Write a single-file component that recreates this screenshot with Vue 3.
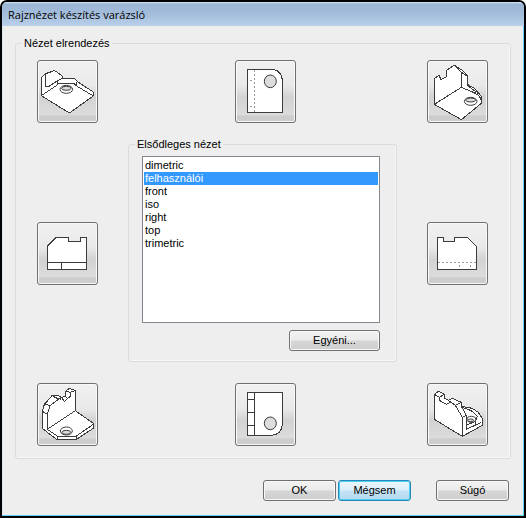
<script setup>
import { ref } from 'vue'

const views = ['dimetric', 'felhasználói', 'front', 'iso', 'right', 'top', 'trimetric']
const primary = ref('felhasználói')

const topRow = [
  {
    label: 'Bal felső izometrikus nézet', box: '21 18 183 189',
    body: 'M34 71 L47 59 L73 50 L82 55 L97 66 L98 73 L133 73 L142 83 L190 114 V126 L118 177 L34 125 Z',
    lines: 'M47 59 V97 L56 98 L83 80 L97 73 M34 125 L83 92 M83 80 V90 L91 87 H130 L140 96 L190 126 M140 83 V96',
    holes: [[109, 106, 19, 12], [109, 103, 14, 6]],
  },
  {
    label: 'Felülnézet', box: '21 24 183 189',
    body: 'M58 52 H130 Q163 54 163 88 V181 H58 Z',
    dashes: 'M79 55 V181 M66 85 H73 M66 163 H73',
    holes: [[127, 88, 18, 19]],
  },
  {
    label: 'Jobb felső izometrikus nézet', box: '21 24 183 189',
    body: 'M43 79 L58 70 L62 83 L79 74 V55 L103 40 L127 55 L142 70 V97 L163 109 L184 133 V154 L124 203 L43 157 Z',
    lines: 'M103 40 L124 61 V106 L43 157 M124 61 L142 73 M124 106 L160 121 L178 132 L184 145 M142 100 L166 118 V124 M172 119 V130',
    holes: [[152, 148, 19, 12], [152, 144, 15, 6]],
  },
]
const left = {
  label: 'Bal oldalnézet', box: '21 21 183 189',
  body: 'M52 94 L79 67 H115 V79 H151 V67 H169 V163 H52 Z',
  lines: 'M52 142 H169 M94 142 V163',
}
const right = {
  label: 'Jobb oldalnézet', box: '21 21 183 189',
  body: 'M52 67 H70 V79 H103 V67 H142 L169 94 V163 H52 Z',
  dashes: 'M55 142 H169 M118 151 V160 M151 151 V160',
}
const bottomRow = [
  {
    label: 'Bal alsó izometrikus nézet', box: '21 21 183 189',
    body: 'M37 106 L43 85 L67 58 L85 58 L94 64 L106 61 V46 L118 37 L136 43 V104 L190 142 V157 L139 190 L82 192 L37 157 Z',
    lines: 'M37 106 L52 115 V160 M52 115 L61 88 L94 64 M43 85 L61 88 M67 58 L76 65 L94 70 M94 64 L103 76 L121 61 V49 L136 43 M106 46 L121 49 M106 61 L112 68 M52 160 L136 104 M52 160 L82 180 H139 L190 145 M82 180 V192 M139 180 V190',
    holes: [[109, 165, 18, 12], [109, 169, 13, 6]],
  },
  {
    label: 'Alulnézet', box: '21 21 183 189',
    body: 'M58 49 H163 V145 Q161 176 130 178 H58 Z',
    lines: 'M79 49 V178 M58 70 H79 M58 109 H79 M58 148 H79',
    holes: [[127, 142, 18, 19]],
  },
  {
    label: 'Jobb alsó izometrikus nézet', box: '21 21 183 189',
    body: 'M43 55 L55 46 L73 55 V67 L85 73 L97 67 L124 79 V91 L157 97 L175 109 L187 127 V148 L127 181 L43 130 Z',
    lines: 'M43 55 L58 64 L73 55 M58 64 V73 L79 85 L91 79 M85 73 L106 88 L124 79 M106 88 L127 124 V181 M124 91 L139 118 L127 124 M139 118 V160 L184 139 M127 94 L154 104 L172 121 L166 136 L139 148 M166 136 V148',
    holes: [[154, 130, 13, 9], [152, 133, 9, 4]],
  },
]
const cells = [
  ...topRow.map((v, i) => ({ ...v, area: 't' + i })),
  { ...left, area: 'm0' },
  { ...right, area: 'm2' },
  ...bottomRow.map((v, i) => ({ ...v, area: 'b' + i })),
]
</script>

<template>
  <main class="window">
    <header class="titlebar"><h1>Rajznézet készítés varázsló</h1></header>
    <form class="content" @submit.prevent>
      <fieldset class="group">
        <legend>Nézet elrendezés</legend>
        <div class="layout">
          <button v-for="c in cells" :key="c.area" type="button" class="view" :class="c.area" :aria-label="c.label">
            <svg :viewBox="c.box" aria-hidden="true">
              <path class="body" :d="c.body" />
              <path v-if="c.lines" class="line" :d="c.lines" />
              <path v-if="c.dashes" class="dash" :d="c.dashes" />
              <ellipse v-for="(h, i) in c.holes" :key="i" class="hole" :class="{ rim: c.holes.length > 1 && i === 0 }" :cx="h[0]" :cy="h[1]" :rx="h[2]" :ry="h[3]" />
            </svg>
          </button>
          <fieldset class="group primary">
            <legend><label for="primary-view">Elsődleges nézet</label></legend>
            <div class="primary-body">
              <select id="primary-view" v-model="primary" size="12">
                <option v-for="v in views" :key="v" :value="v">{{ v }}</option>
              </select>
              <button type="button" class="push custom">Egyéni...</button>
            </div>
          </fieldset>
        </div>
      </fieldset>
      <footer class="actions">
        <button type="submit" class="push">OK</button>
        <button type="button" class="push focused">Mégsem</button>
        <button type="button" class="push help">Súgó</button>
      </footer>
    </form>
  </main>
</template>

<style>
body {
  background: #fff;
}
</style>

<style scoped>
.window {
  box-sizing: border-box;
  min-height: 100vh;
  border: 2px solid #000;
  border-radius: 7px 7px 0 0;
  background: #eee;
  box-shadow: inset -1px -1px #5fd0f5, inset 1px 0 #d9e8f5;
  color: #000;
  font: 11px/13px "Liberation Sans", Arial, sans-serif;
}
.titlebar {
  display: flex;
  align-items: center;
  height: 24px;
  padding: 0 6px;
  border-radius: 5px 5px 0 0;
  background: linear-gradient(#dce9f6 0, #9ab5d5 2px, #a3bddb 50%, #b9d0e9 100%);
}
h1 {
  margin: 0;
  padding-top: 2px;
  font: 11px/16px "Open Sans", "Noto Sans", sans-serif;
}
.content {
  padding: 11px 13px 15px;
}
.group {
  min-width: 0;
  margin: 0;
  padding: 0;
  border: 1px solid #d8dde0;
  border-radius: 3px;
  box-shadow: inset -1px -1px #f8f8f8;
}
.group legend {
  margin-left: 6px;
  padding: 0 2px;
}
.layout {
  display: grid;
  grid-template-columns: 61px 1fr 61px;
  grid-template-areas: "t0 t1 t2" "m0 c m2" "b0 b1 b2";
  gap: 15px 30px;
  align-items: center;
  justify-items: center;
  padding: 10px 22px 12px 21px;
}
.t0 { grid-area: t0; }
.t1 { grid-area: t1; }
.t2 { grid-area: t2; }
.m0 { grid-area: m0; }
.m2 { grid-area: m2; }
.b0 { grid-area: b0; }
.b1 { grid-area: b1; }
.b2 { grid-area: b2; }
.view,
.push {
  box-sizing: border-box;
  margin: 0;
  border: 1px solid #707070;
  border-radius: 3px;
  background: linear-gradient(#f2f2f2, #ebebeb 45%, #d6d6d6 55%, #cecece);
  box-shadow: inset 0 0 0 1px #f8f8f8;
  color: #000;
  font: inherit;
}
.view {
  width: 61px;
  height: 63px;
  padding: 0;
  background: linear-gradient(#f1f1f1, #e9e9e9 40%, #d2d2d2 60%, #dcdcdc 88%, #cdcdcd 90%);
}
.view.t1,
.view.b1 {
  margin-left: 6px;
}
.view svg {
  display: block;
  width: 61px;
  height: 63px;
  margin: -1px;
  shape-rendering: crispEdges;
}
.body,
.line,
.dash,
.hole {
  fill: none;
  stroke: #3c3c3c;
  stroke-width: 3;
}
.body {
  fill: #fff;
}
.dash {
  stroke: #999;
  stroke-dasharray: 6 6;
}
.hole {
  fill: #ddd;
  shape-rendering: auto;
}
.rim {
  fill: #fff;
}
.primary {
  grid-area: c;
  box-sizing: border-box;
  display: block;
  width: 100%;
  margin-bottom: 6px;
}
.primary-body {
  padding: 5px 16px 10px 13px;
}
select {
  appearance: none;
  box-sizing: border-box;
  display: block;
  width: 100%;
  height: 167px;
  margin: 0;
  padding: 2px 1px 1px;
  border: 1px solid #828790;
  border-radius: 0;
  outline: 0;
  overflow: hidden;
  background: #fff;
  color: #000;
  font: inherit;
}
option {
  min-height: 13px;
  padding: 0 1px;
  line-height: 13px;
}
option:checked {
  background: linear-gradient(#39f, #39f);
  color: #fff;
}
.push {
  width: 73px;
  height: 21px;
  padding: 0;
}
.custom {
  display: block;
  width: 91px;
  margin: 7px 0 0 auto;
}
.actions {
  display: flex;
  justify-content: flex-end;
  gap: 2px;
  padding: 21px 2px 0 0;
}
.focused {
  border-color: #2c86b5;
  background: linear-gradient(#edf6fb, #dceffa 45%, #c2e2f5 55%, #b5d9ee);
  box-shadow: inset 0 0 0 1px #48d0f5;
}
.help {
  margin-left: 23px;
}
</style>
